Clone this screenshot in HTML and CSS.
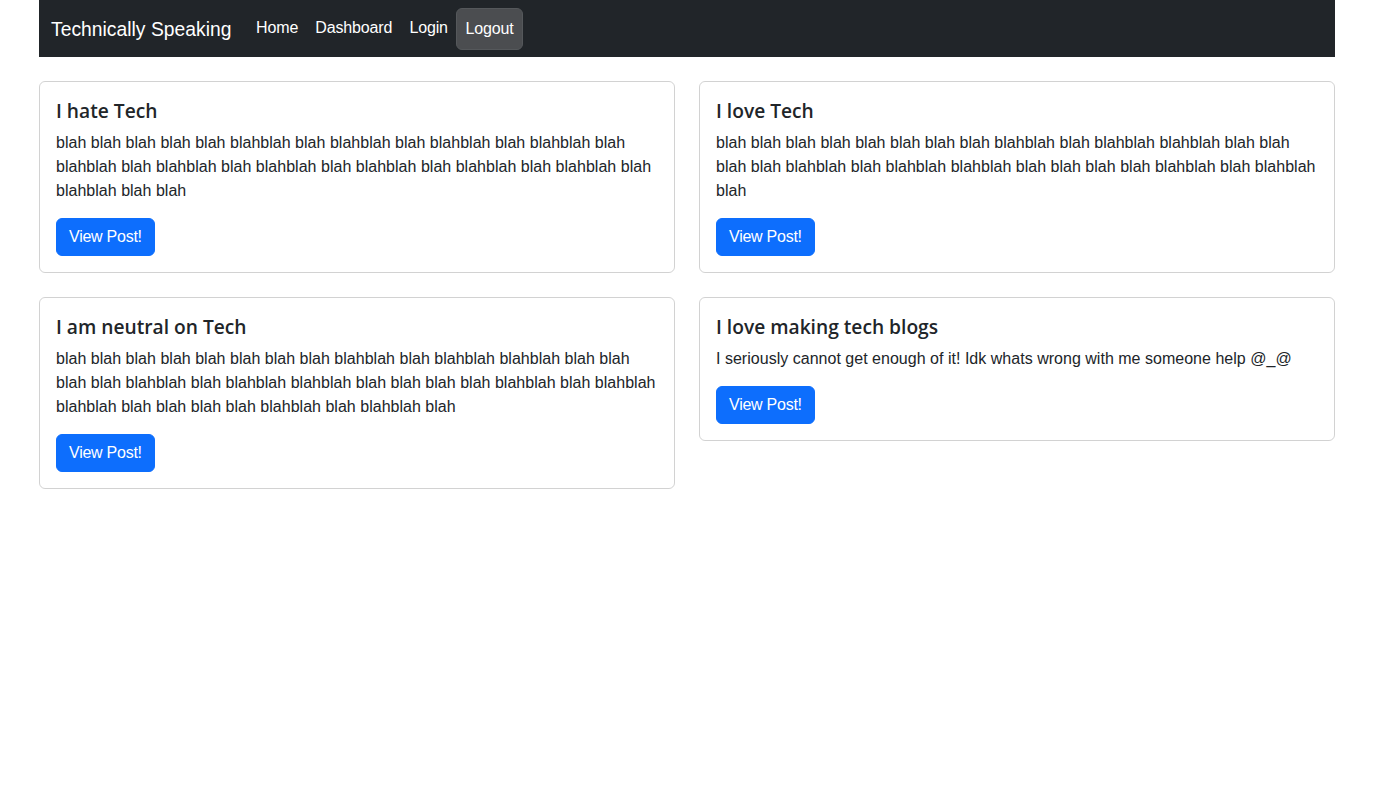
FILE: index.html
```html
<!DOCTYPE html>
<html>
<head>
<meta charset="utf-8">
<title>Technically Speaking</title>
<link rel="stylesheet" href="styles.css">
</head>
<body>
<div class="page">
  <nav class="navbar">
    <a class="brand" href="#">Technically Speaking</a>
    <ul class="nav">
      <li><a class="nav-link" href="#">Home</a></li>
      <li><a class="nav-link" href="#">Dashboard</a></li>
      <li><a class="nav-link" href="#">Login</a></li>
      <li><a class="nav-link boxed" href="#">Logout</a></li>
    </ul>
  </nav>
  <main class="grid">
    <div class="card">
      <h5 class="card-title">I hate Tech</h5>
      <p class="card-text">blah blah blah blah blah blahblah blah blahblah blah blahblah blah blahblah blah blahblah blah blahblah blah blahblah blah blahblah blah blahblah blah blahblah blah blahblah blah blah</p>
      <a class="btn" href="#">View Post!</a>
    </div>
    <div class="card">
      <h5 class="card-title">I love Tech</h5>
      <p class="card-text">blah blah blah blah blah blah blah blah blahblah blah blahblah blahblah blah blah blah blah blahblah blah blahblah blahblah blah blah blah blah blahblah blah blahblah blah</p>
      <a class="btn" href="#">View Post!</a>
    </div>
    <div class="card">
      <h5 class="card-title">I am neutral on Tech</h5>
      <p class="card-text">blah blah blah blah blah blah blah blah blahblah blah blahblah blahblah blah blah blah blah blahblah blah blahblah blahblah blah blah blah blah blahblah blah blahblah blahblah blah blah blah blah blahblah blah blahblah blah</p>
      <a class="btn" href="#">View Post!</a>
    </div>
    <div class="card">
      <h5 class="card-title">I love making tech blogs</h5>
      <p class="card-text">I seriously cannot get enough of it! Idk whats wrong with me someone help @_@</p>
      <a class="btn" href="#">View Post!</a>
    </div>
  </main>
</div>
</body>
</html>
```
FILE: styles.css
```css
* { box-sizing: border-box; }
html, body { margin: 0; padding: 0; background: #fff; }
body {
  font-family: "Liberation Sans", Arial, sans-serif;
  font-size: 16px;
  line-height: 24px;
  color: #212529;
  letter-spacing: 0.02px;
}
.page { width: 1296px; margin-left: 39px; }
.navbar {
  background: #212529;
  display: flex;
  align-items: center;
  padding: 8px 12px;
  height: 57px;
}
.brand {
  color: #fff;
  text-decoration: none;
  font-size: 19.3px;
  line-height: 30px;
  margin-right: 16px;
  padding: 6px 0 4px;
}
.nav { list-style: none; margin: 0; padding: 0; display: flex; align-items: center; }
.nav-link {
  display: block;
  padding: 7px 7.6px 9px;
  color: #fff;
  text-decoration: none;
  border: 1px solid transparent;
  border-radius: 6px;
  letter-spacing: -0.15px;
}
.nav-link.boxed {
  background: #4b4d50;
  border-color: #55585b;
  padding: 8px 8px;
  margin-top: 1px;
}
.grid {
  display: grid;
  grid-template-columns: 1fr 1fr;
  gap: 24px;
  margin-top: 24px;
  align-items: start;
}
.card {
  border: 1px solid rgba(0,0,0,.175);
  border-radius: 6px;
  padding: 16px;
}
.card-title {
  margin: 0 0 8px;
  padding-top: 1px;
  font-family: "Open Sans", sans-serif;
  font-size: 19.2px;
  line-height: 24px;
  font-weight: 600;
  letter-spacing: 0;
}
.card-text { margin: 0 0 15px; }
.btn {
  display: inline-block;
  background: #0d6efd;
  color: #fff;
  text-decoration: none;
  padding: 6px 12px;
  border: 1px solid #0d6efd;
  border-radius: 6px;
  letter-spacing: -0.25px;
}
```
